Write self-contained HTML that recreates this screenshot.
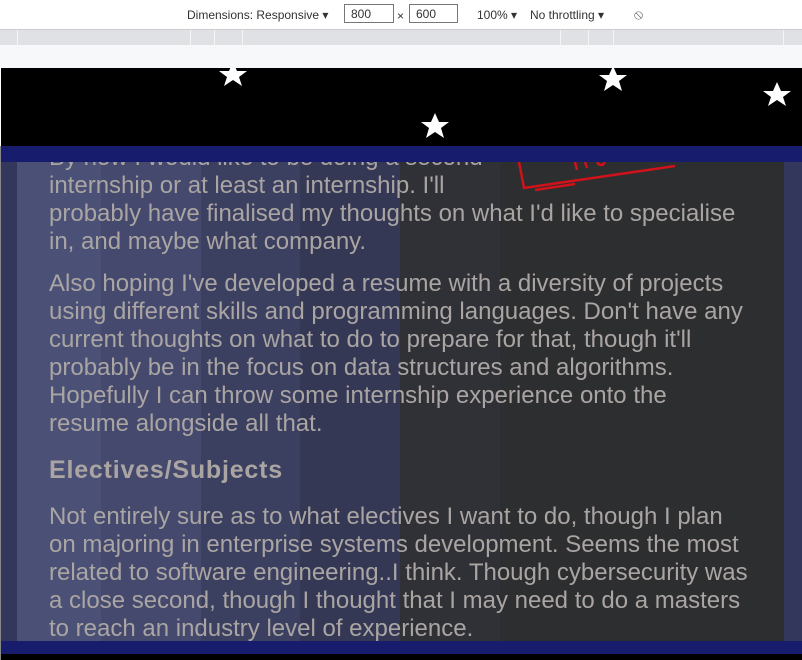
<!DOCTYPE html>
<html><head><style>
body{margin:0;width:802px;height:660px;overflow:hidden;background:#fff;font-family:"Liberation Sans",Arial,sans-serif;position:relative}
.a{position:absolute}
.tb{top:0;left:0;width:802px;height:29px;background:#fff;border-bottom:1px solid #ccc;font-size:12px;color:#333}
.tb span{position:absolute;top:8px}
.inp{position:absolute;top:4px;height:19px;border:1px solid #777;background:#fff;font-size:12px;line-height:19px;padding-left:6px;box-sizing:border-box}
.r2{top:30px;left:0;width:802px;height:15px;background:#dfe1e5}
.r2 i{position:absolute;top:0;width:1px;height:15px;background:#f5f5f5}
.r3{top:45px;left:0;width:802px;height:23px;background:#f7f8f9}
p{margin:0}
.txt{color:#aaa5a3;font-size:24px;line-height:28px;left:49px;width:740px;white-space:nowrap}
</style></head><body>
<div class="a tb">
<span style="left:187px">Dimensions: Responsive ▾</span>
<div class="inp" style="left:344px;width:50px">800</div><span style="left:397px;top:9px">×</span>
<div class="inp" style="left:409px;width:49px">600</div>
<span style="left:477px">100% ▾</span><span style="left:530px">No throttling ▾</span>
<span style="left:634px;font-size:14px;top:6px;color:#666">⦸</span>
</div>
<div class="a r2"><i style="left:17px"></i><i style="left:190px"></i><i style="left:214px"></i><i style="left:242px"></i><i style="left:560px"></i><i style="left:588px"></i><i style="left:613px"></i><i style="left:783px"></i></div>
<div class="a r3"></div>
<div class="a" style="top:68px;left:1px;width:801px;height:592px;background:#33375c"></div>
<div class="a" style="top:68px;left:1px;width:801px;height:78px;background:#000;overflow:hidden">
<svg width="801" height="78">
<g fill="#fff">
<polygon points="232,-6 236,3 246,3 238,9 241,18 232,12 223,18 226,9 218,3 228,3"/>
<polygon points="612,-2 616,7 626,7 618,13 621,23 612,17 603,23 606,13 598,7 608,7"/>
<polygon points="776,14 780,23 790,23 782,29 785,38 776,32 767,38 770,29 762,23 772,23"/>
<polygon points="434,45 438,54 448,54 440,60 443,70 434,64 425,70 428,60 420,54 430,54"/>
</g></svg></div>
<div class="a" style="top:146px;left:1px;width:801px;height:16px;background:#171d6c"></div>
<div class="a" style="top:162px;left:17px;width:84px;height:479px;background:#4b5176"></div>
<div class="a" style="top:162px;left:101px;width:100px;height:479px;background:#44496d"></div>
<div class="a" style="top:162px;left:201px;width:99px;height:479px;background:#3c4060"></div>
<div class="a" style="top:162px;left:300px;width:100px;height:479px;background:#353854"></div>
<div class="a" style="top:162px;left:400px;width:100px;height:479px;background:#2f3136"></div>
<div class="a" style="top:162px;left:500px;width:284px;height:479px;background:#2c2e30"></div>
<svg class="a" style="top:162px;left:515px" width="170" height="30"><g stroke="#d0121a" stroke-width="2.5" fill="none"><path d="M4,0 L9,26 L160,4"/><path d="M20,28 L60,22"/><path d="M60,0 L62,8 M70,0 L72,6 M82,0 Q86,6 90,0"/></g></svg>
<div class="a txt" style="top:144px;clip-path:inset(18px 0 0 0)">By now I would like to be doing a second<br>internship or at least an internship. I'll<br>probably have finalised my thoughts on what I'd like to specialise<br>in, and maybe what company.</div>
<div class="a txt" style="top:270px">Also hoping I've developed a resume with a diversity of projects<br>using different skills and programming languages. Don't have any<br>current thoughts on what to do to prepare for that, though it'll<br>probably be in the focus on data structures and algorithms.<br>Hopefully I can throw some internship experience onto the<br>resume alongside all that.</div>
<div class="a txt" style="top:456px;font-weight:bold;font-size:25px;letter-spacing:0.8px">Electives/Subjects</div>
<div class="a txt" style="top:503px">Not entirely sure as to what electives I want to do, though I plan<br>on majoring in enterprise systems development. Seems the most<br>related to software engineering..I think. Though cybersecurity was<br>a close second, though I thought that I may need to do a masters<br>to reach an industry level of experience.</div>
<div class="a" style="top:641px;left:1px;width:801px;height:13px;background:#171d6c"></div>
<div class="a" style="top:654px;left:1px;width:801px;height:6px;background:#000"></div>
<div class="a" style="top:146px;left:0;width:1px;height:514px;background:#888"></div>
</body></html>
